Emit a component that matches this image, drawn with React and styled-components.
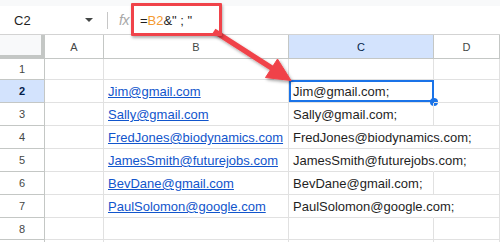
import React from 'react';
import styled, { createGlobalStyle } from 'styled-components';

const GlobalStyle = createGlobalStyle`
    html, body {
        margin: 0;
        padding: 0;
        background: #fff;
    }
    body {
        font-family: "Liberation Sans", Arial, sans-serif;
    }
`;

const columns = [
    { key: 'A', width: 59 },
    { key: 'B', width: 185 },
    { key: 'C', width: 145 },
    { key: 'D', width: 66 },
];

// row 9 only peeks in at the bottom edge, so it gets no label
const rows = [
    { n: 1, h: 21 },
    { n: 2, h: 23, b: 'Jim@gmail.com', c: 'Jim@gmail.com;' },
    { n: 3, h: 23, b: 'Sally@gmail.com', c: 'Sally@gmail.com;' },
    { n: 4, h: 23, b: 'FredJones@biodynamics.com', c: 'FredJones@biodynamics.com;', spill: true },
    { n: 5, h: 23, b: 'JamesSmith@futurejobs.com', c: 'JamesSmith@futurejobs.com;', spill: true },
    { n: 6, h: 23, b: 'BevDane@gmail.com', c: 'BevDane@gmail.com;' },
    { n: 7, h: 23, b: 'PaulSolomon@google.com', c: 'PaulSolomon@google.com;', spill: true },
    { n: 8, h: 22 },
    { n: 9, h: 23, hidden: true },
];

function App() {
    return (
        <Page>
            <GlobalStyle />
            <TopStrip />
            <FormulaBar>
                <NameBox>
                    <span>C2</span>
                    <Caret />
                </NameBox>
                <Divider />
                <Fx>fx</Fx>
                <Formula>=<Ref>B2</Ref>&amp;" ; "</Formula>
            </FormulaBar>

            <Sheet>
                <Corner />
                {columns.map(col => (
                    <ColHead key={col.key} $active={col.key === 'C'}>{col.key}</ColHead>
                ))}

                {rows.map(row => (
                    <React.Fragment key={row.n}>
                        <RowHead $h={row.h} $active={row.n === 2}>{row.hidden ? null : row.n}</RowHead>
                        <Cell $h={row.h} />
                        <Cell $h={row.h}>
                            {row.b ? <Link>{row.b}</Link> : null}
                        </Cell>
                        <Cell $h={row.h} $spill={row.spill}>
                            {row.c}
                            {row.n === 2 ?
                                <Selection>
                                    <Handle />
                                </Selection>
                            : null}
                        </Cell>
                        <Cell $h={row.h} />
                    </React.Fragment>
                ))}
            </Sheet>

            <Callout />
            <Arrow width="110" height="80" viewBox="200 20 110 80">
                <defs>
                    <filter id="shade" x="-20%" y="-20%" width="150%" height="150%">
                        <feDropShadow dx="1.5" dy="2" stdDeviation="1.5" floodColor="#000" floodOpacity="0.35" />
                    </filter>
                </defs>
                <g filter="url(#shade)" fill="#f0434a" stroke="#f0434a">
                    <line x1="214" y1="31" x2="274" y2="69.5" strokeWidth="5.5" />
                    <polygon points="291,80.5 265.5,77.5 277.5,59" strokeWidth="1" strokeLinejoin="round" />
                </g>
            </Arrow>
        </Page>
    )
}

const Page = styled.div`
    position: relative;
    width: 500px;
    height: 242px;
    overflow: hidden;
    background: #fff;
`;

const TopStrip = styled.div`
    height: 6px;
    background: #f8f9fa;
`;

const FormulaBar = styled.div`
    display: flex;
    align-items: center;
    height: 28px;
    border-bottom: 1px solid #d3d3d3;
    color: #1f1f1f;
`;

const NameBox = styled.div`
    display: flex;
    align-items: center;
    justify-content: space-between;
    width: 100px;
    box-sizing: border-box;
    padding: 0 7px 0 14px;
    font-size: 13px;
`;

const Caret = styled.span`
    width: 0;
    height: 0;
    border-left: 4px solid transparent;
    border-right: 4px solid transparent;
    border-top: 4px solid #444746;
`;

const Divider = styled.div`
    width: 1px;
    height: 17px;
    margin-left: 7px;
    background: #c7c7c7;
`;

const Fx = styled.span`
    margin-left: 11px;
    font-size: 14px;
    font-style: italic;
    color: #a8a8a8;
    letter-spacing: -0.5px;
`;

const Formula = styled.span`
    margin-left: 11px;
    font-size: 13px;
    white-space: pre;
    color: #1f1f1f;
`;

const Ref = styled.span`
    color: #f59a2f;
`;

const Sheet = styled.div`
    display: grid;
    grid-template-columns: 45px ${columns.map(c => c.width + 'px').join(' ')};
    font-size: 13px;
`;

const Corner = styled.div`
    height: 24px;
    box-sizing: border-box;
    background: #f8f9fa;
    border-right: 4px solid #c4c7c5;
    border-bottom: 4px solid #c4c7c5;
`;

const ColHead = styled.div`
    height: 24px;
    box-sizing: border-box;
    display: flex;
    align-items: center;
    justify-content: center;
    font-size: 11px;
    background: ${props => props.$active ? '#d3e3fd' : '#fff'};
    color: ${props => props.$active ? '#041e49' : '#444746'};
    border-right: 1px solid #c4c7c5;
    border-bottom: 1px solid #c4c7c5;
`;

const RowHead = styled.div`
    height: ${props => props.$h}px;
    box-sizing: border-box;
    display: flex;
    align-items: center;
    justify-content: center;
    font-size: 11px;
    background: ${props => props.$active ? '#d3e3fd' : '#fff'};
    color: ${props => props.$active ? '#041e49' : '#444746'};
    font-weight: ${props => props.$active ? 700 : 400};
    border-right: 1px solid #c4c7c5;
    border-bottom: 1px solid #c4c7c5;
`;

const Cell = styled.div`
    position: relative;
    height: ${props => props.$h}px;
    box-sizing: border-box;
    display: flex;
    align-items: flex-end;
    padding: 0 4px 2px;
    line-height: 16px;
    white-space: nowrap;
    color: #1f1f1f;
    border-right: 1px solid ${props => props.$spill ? 'transparent' : '#e1e1e1'};
    border-bottom: 1px solid #e1e1e1;
    z-index: ${props => props.$spill ? 1 : 0};
`;

const Link = styled.span`
    color: #1155cc;
    text-decoration: underline;
`;

const Selection = styled.div`
    position: absolute;
    top: 0;
    left: 0;
    right: -1px;
    bottom: 0;
    border: 2px solid #1a73e8;
    z-index: 2;
`;

const Handle = styled.div`
    position: absolute;
    right: -6px;
    bottom: -6px;
    width: 8px;
    height: 8px;
    border-radius: 50%;
    background: #1a73e8;
`;

const Callout = styled.div`
    position: absolute;
    left: 131px;
    top: 3px;
    width: 91px;
    height: 33px;
    box-sizing: border-box;
    border: 3px solid #f0434a;
    border-radius: 1px;
    box-shadow: 1px 2px 3px rgba(0, 0, 0, 0.3);
    z-index: 4;
`;

const Arrow = styled.svg`
    position: absolute;
    left: 200px;
    top: 20px;
    overflow: visible;
    pointer-events: none;
    z-index: 3;
`;

export default App;
